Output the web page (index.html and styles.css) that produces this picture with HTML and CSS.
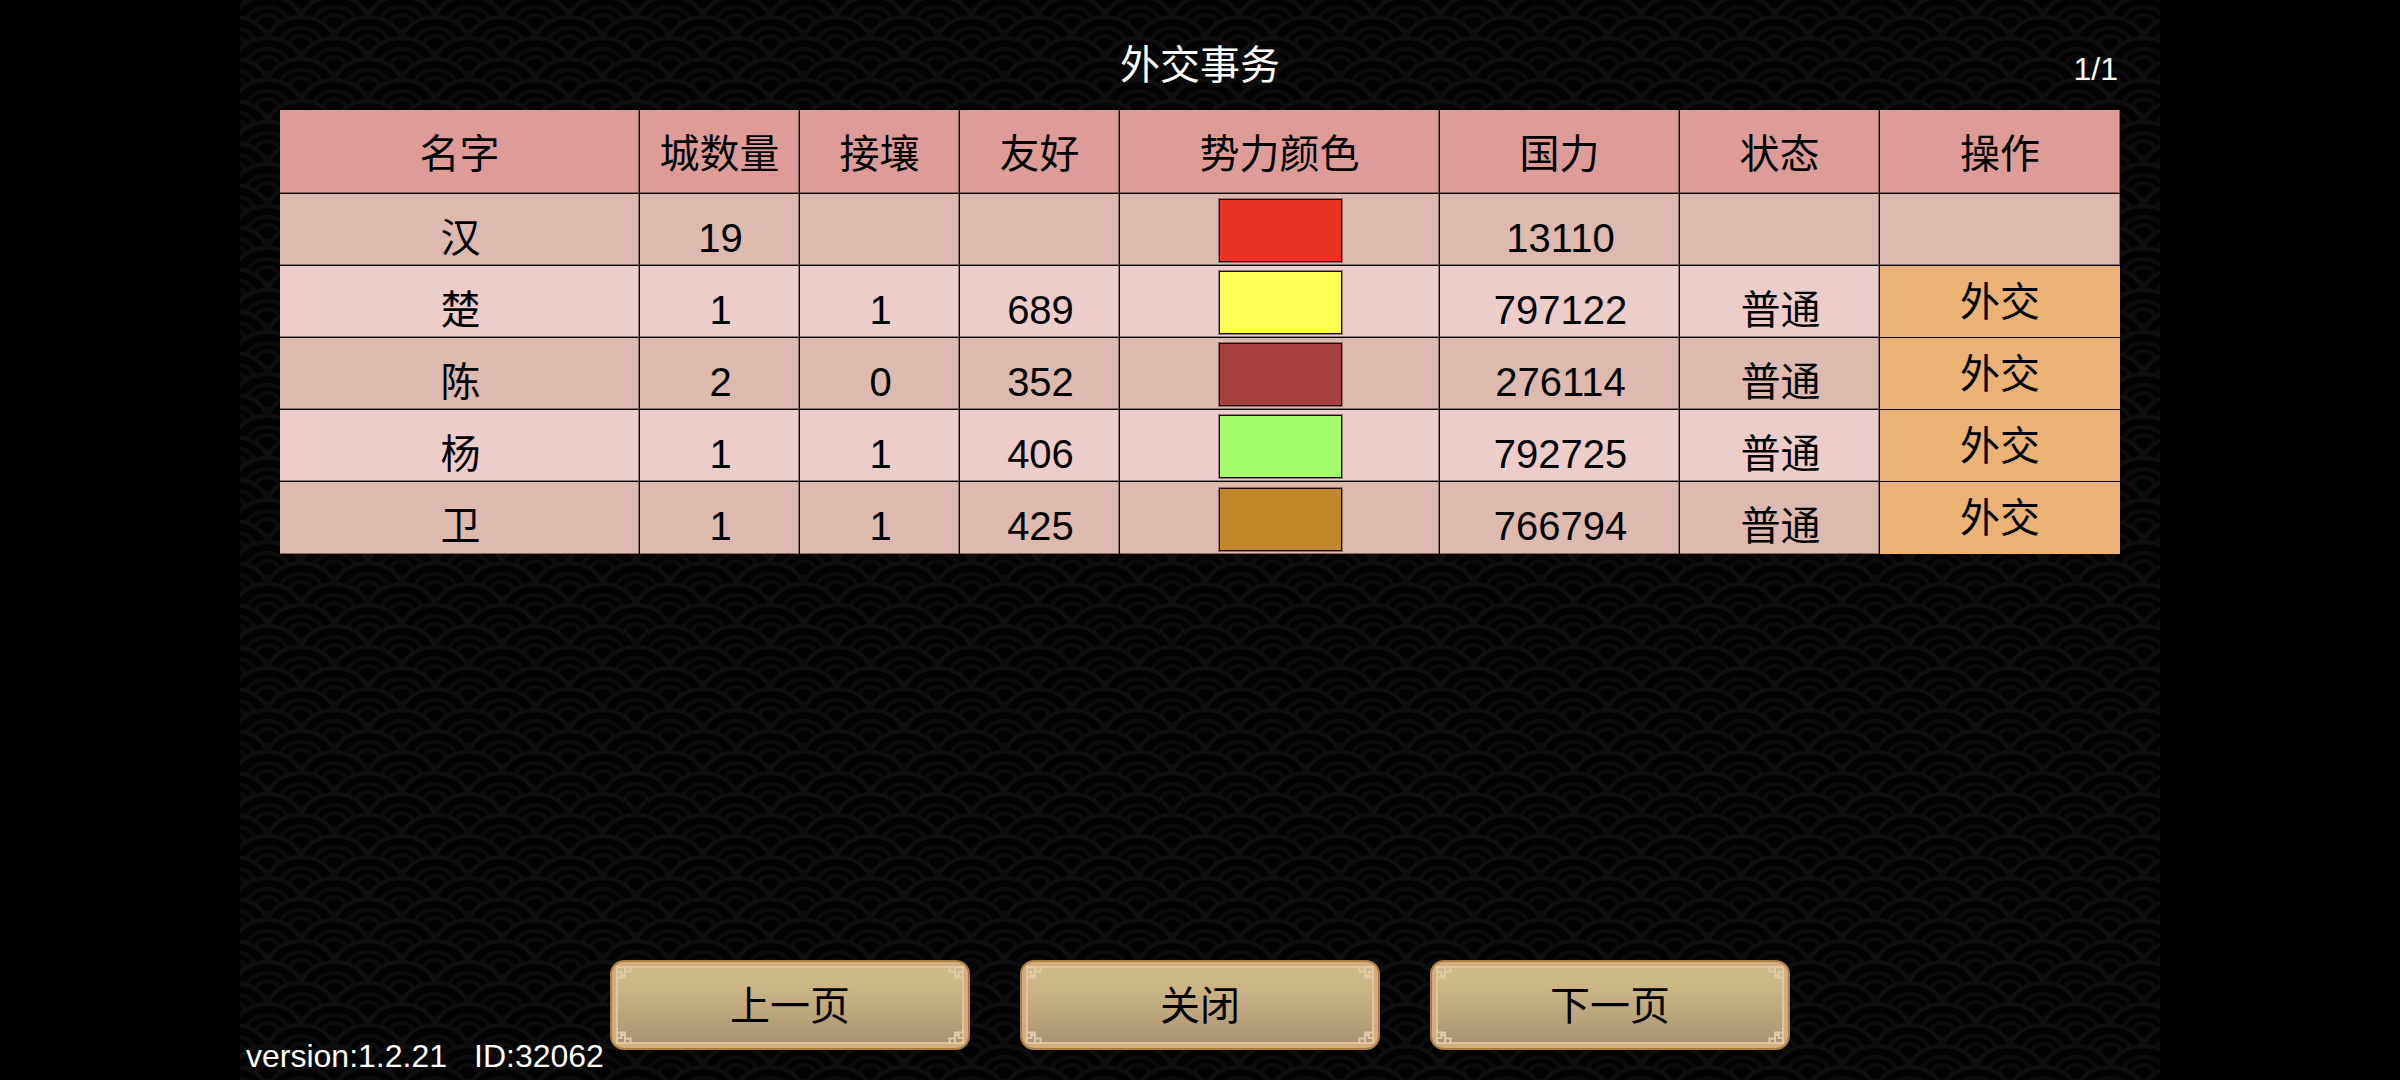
FILE: index.html
```
<!DOCTYPE html>
<html lang="zh-CN">
<head>
<meta charset="utf-8">
<meta name="viewport" content="width=device-width, initial-scale=1">
<title>外交事务</title>
<link rel="stylesheet" href="styles.css">
</head>
<body>
<svg class="defs" width="0" height="0" aria-hidden="true">
  <symbol id="knot" viewBox="0 0 16 16">
    <path d="M1 16V11.500H5.500V6H1V1H9V9H4M5.500 11.500H9V5.500H14.500V1H16" />
  </symbol>
</svg>
<main class="screen">
  <svg class="waves" width="100%" height="100%" aria-hidden="true">
    <defs>
      <g id="scale">
        <ellipse rx="34" ry="27" class="wave-edge" />
        <ellipse rx="21" ry="16" />
        <ellipse rx="11" ry="8" />
      </g>
      <pattern id="seigaiha" width="67" height="42" patternUnits="userSpaceOnUse" y="-5" x="-6">
        <use href="#scale" x="0" y="7" /><use href="#scale" x="67" y="7" />
        <use href="#scale" x="33.500" y="28" />
        <use href="#scale" x="0" y="49" /><use href="#scale" x="67" y="49" />
        <use href="#scale" x="33.500" y="70" />
      </pattern>
    </defs>
    <rect width="100%" height="100%" fill="url(#seigaiha)" />
  </svg>

  <header class="top">
    <h1 class="title">外交事务</h1>
    <span class="page-no">1/1</span>
  </header>

  <table class="states">
    <colgroup>
      <col class="c-name"><col class="c-small"><col class="c-small"><col class="c-small">
      <col class="c-color"><col class="c-power"><col class="c-status"><col class="c-action">
    </colgroup>
    <thead>
      <tr><th>名字</th><th>城数量</th><th>接壤</th><th>友好</th><th>势力颜色</th><th>国力</th><th>状态</th><th>操作</th></tr>
    </thead>
    <tbody>
      <tr><td>汉</td><td>19</td><td></td><td></td><td class="swatch-cell"><span class="swatch han"></span></td><td>13110</td><td></td><td></td></tr>
      <tr><td>楚</td><td>1</td><td>1</td><td>689</td><td class="swatch-cell"><span class="swatch chu"></span></td><td>797122</td><td>普通</td><td class="action"><button type="button">外交</button></td></tr>
      <tr><td>陈</td><td>2</td><td>0</td><td>352</td><td class="swatch-cell"><span class="swatch chen"></span></td><td>276114</td><td>普通</td><td class="action"><button type="button">外交</button></td></tr>
      <tr><td>杨</td><td>1</td><td>1</td><td>406</td><td class="swatch-cell"><span class="swatch yang"></span></td><td>792725</td><td>普通</td><td class="action"><button type="button">外交</button></td></tr>
      <tr><td>卫</td><td>1</td><td>1</td><td>425</td><td class="swatch-cell"><span class="swatch wei"></span></td><td>766794</td><td>普通</td><td class="action"><button type="button">外交</button></td></tr>
    </tbody>
  </table>

  <nav class="pager">
    <button type="button" class="plate"><svg class="knot tl"><use href="#knot"/></svg><svg class="knot tr"><use href="#knot"/></svg><svg class="knot bl"><use href="#knot"/></svg><svg class="knot br"><use href="#knot"/></svg>上一页</button>
    <button type="button" class="plate"><svg class="knot tl"><use href="#knot"/></svg><svg class="knot tr"><use href="#knot"/></svg><svg class="knot bl"><use href="#knot"/></svg><svg class="knot br"><use href="#knot"/></svg>关闭</button>
    <button type="button" class="plate"><svg class="knot tl"><use href="#knot"/></svg><svg class="knot tr"><use href="#knot"/></svg><svg class="knot bl"><use href="#knot"/></svg><svg class="knot br"><use href="#knot"/></svg>下一页</button>
  </nav>

  <footer class="build"><span>version:1.2.21</span><span>ID:32062</span></footer>
</main>
</body>
</html>
```
FILE: styles.css
```
* {
  box-sizing: border-box;
}

body {
  margin: 0;
  background: #000;
  color: #fff;
  font-family: "Liberation Sans", "Noto Sans CJK SC", sans-serif;
  font-size: 40px;
}

button {
  margin: 0;
  border: 0;
  color: #000;
  font: inherit;
  cursor: pointer;
}

.defs {
  position: absolute;
}

.screen {
  position: relative;
  display: flex;
  flex-direction: column;
  width: 80%;
  min-height: 100vh;
  margin: 0 auto;
  padding: 0 40px;
  isolation: isolate;
}

/* Backdrop of overlapping wave scales */
.waves {
  position: absolute;
  inset: 0;
  z-index: -1;
}

.waves ellipse {
  fill: #020202;
  stroke: #0b0b0b;
  stroke-width: 4;
}

.waves .wave-edge {
  stroke: #0e0e0e;
}

.top {
  display: grid;
  grid-template-columns: 1fr auto 1fr;
  align-items: center;
  height: 110px;
  padding-top: 20px;
}

.title {
  grid-column: 2;
  margin: 0;
  font-size: 40px;
  font-weight: 400;
  line-height: 60px;
}

.page-no {
  justify-self: end;
  padding: 8px 2px 0 0;
  font-size: 32px;
  line-height: 40px;
}

.states {
  width: 100%;
  border-spacing: 0;
  table-layout: fixed;
  color: #000;
  text-align: center;
}

.c-name { width: 360px; }
.c-small { width: 160px; }
.c-color { width: 320px; }
.c-power { width: 240px; }
.c-status { width: 200px; }
.c-action { width: 240px; }

.states th,
.states td {
  padding: 0;
  border: solid #0c0505;
  border-width: 0 1px 1px 0;
  box-shadow: inset -1px -1px rgb(0 0 0 / 40%);
}

.states tr > :last-child {
  border-right: 0;
}

.states tbody tr:last-child td {
  border-bottom: 0;
}

.states th {
  height: 84px;
  padding-bottom: 2px;
  background: #de9c99;
  font-weight: 400;
}

.states td {
  height: 72px;
  padding-top: 16px;
  padding-left: 2px;
  background: #deb9b0;
  line-height: 54px;
}

.states tbody tr:nth-child(even) td {
  background: #eccdcc;
}

.states td.swatch-cell {
  padding: 2px 0 0 2px;
}

.states td.action {
  padding: 0;
  box-shadow: none;
}

.swatch {
  display: block;
  width: 123px;
  height: 63px;
  margin: 0 auto;
  border: 1px solid #140808;
  outline: 1px solid rgb(60 20 20 / 45%);
}

.han { background: #ea3323; }
.chu { background: #ffff54; }
.chen { background: #a5403d; }
.yang { background: #a4fb6c; }
.wei { background: #c0872b; }

.action button {
  display: block;
  width: 100%;
  height: 71px;
  padding: 0;
  background: #eab275;
}

.pager {
  display: flex;
  justify-content: center;
  gap: 50px;
  margin-top: auto;
}

.plate {
  position: relative;
  width: 360px;
  height: 90px;
  padding: 0 0 4px;
  border: 2px solid #a87c44;
  border-radius: 14px;
  background: linear-gradient(#cfba84, #cbb585 30%, #a99070);
  box-shadow: inset 0 0 0 4px #d5ac7c;
}

.plate::before {
  content: "";
  position: absolute;
  inset: 4px;
  border: 2px solid #dfc2a0;
}

.knot {
  position: absolute;
  width: 16px;
  height: 16px;
  fill: none;
  stroke: #e0c8a8;
  stroke-width: 2;
}

.tl { top: 4px; left: 4px; }
.tr { top: 4px; right: 4px; transform: scaleX(-1); }
.bl { bottom: 4px; left: 4px; transform: scaleY(-1); }
.br { right: 4px; bottom: 4px; transform: scale(-1); }

.build {
  display: flex;
  gap: 27px;
  height: 30px;
  margin-left: -34px;
  font-size: 32px;
  line-height: 12px;
}
```
